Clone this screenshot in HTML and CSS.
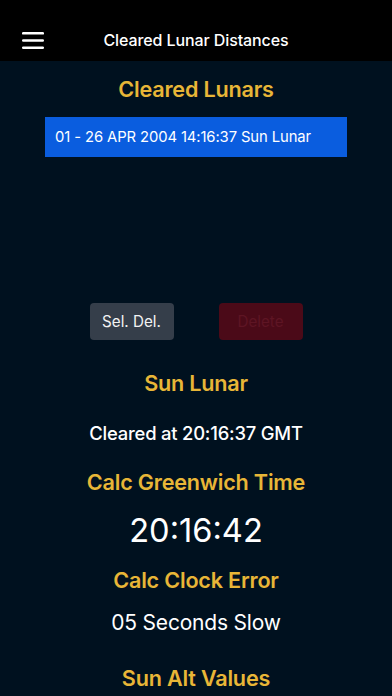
FILE: index.html
```html
<!DOCTYPE html>
<html>
<head>
<meta charset="utf-8">
<link rel="stylesheet" href="styles.css">
</head>
<body>
<header class="topbar">
  <button class="menu" aria-label="Menu">
    <svg width="22" height="18" viewBox="0 0 22 18"><rect x="0" y="1" width="22" height="2.6" rx="1.2" fill="#fff"/><rect x="0" y="8.2" width="22" height="2.6" rx="1.2" fill="#fff"/><rect x="0" y="15.4" width="22" height="2.6" rx="1.2" fill="#fff"/></svg>
  </button>
  <h1 class="title">Cleared Lunar Distances</h1>
</header>
<main class="content">
  <h2 class="heading first">Cleared Lunars</h2>
  <div class="list">
    <div class="list-item">01 - 26 APR 2004 14:16:37 Sun Lunar</div>
  </div>
  <div class="actions">
    <button class="btn btn-sel">Sel. Del.</button>
    <button class="btn btn-del">Delete</button>
  </div>
  <h2 class="heading sun">Sun Lunar</h2>
  <p class="cleared">Cleared at 20:16:37 GMT</p>
  <h2 class="heading gmt">Calc Greenwich Time</h2>
  <p class="time">20:16:42</p>
  <h2 class="heading err">Calc Clock Error</h2>
  <p class="slow">05 Seconds Slow</p>
  <h2 class="heading alt">Sun Alt Values</h2>
</main>
</body>
</html>
```
FILE: styles.css
```css
html, body {
  margin: 0;
  padding: 0;
  background: #00111f;
  height: 696px;
  overflow: hidden;
  font-family: Inter, "Noto Sans", sans-serif;
  color: #fff;
}
.topbar {
  height: 61px;
  background: #000;
  display: flex;
  align-items: center;
  position: relative;
  padding-top: 18px;
  box-sizing: border-box;
}
.menu {
  background: none;
  border: 0;
  padding: 0;
  margin-left: 22px;
  display: flex;
  width: 22px;
  height: 18px;
}
.title {
  margin: 0;
  position: absolute;
  left: 0;
  right: 0;
  top: 31px;
  text-align: center;
  font-size: 16px;
  font-weight: 500;
  line-height: 18px;
  letter-spacing: -0.1px;
  pointer-events: none;
}
.content {
  display: flex;
  flex-direction: column;
  align-items: center;
}
.heading {
  margin: 0;
  color: #e8b637;
  font-weight: 600;
  font-size: 21.6px;
  line-height: 26px;
  letter-spacing: -0.2px;
}
.first { margin-top: 15px; }
.list {
  width: 302px;
  height: 172px;
  margin-top: 15px;
  align-self: flex-start;
  margin-left: 45px;
}
.list-item {
  height: 40px;
  background: #0a5ddf;
  box-sizing: border-box;
  padding-left: 10px;
  display: flex;
  align-items: center;
  font-size: 14.8px;
  letter-spacing: -0.1px;
}
.actions {
  display: flex;
  gap: 45px;
  margin-top: 14px;
}
.btn {
  width: 84px;
  height: 37px;
  border: 0;
  border-radius: 4px;
  font-family: inherit;
  font-size: 15.2px;
}
.btn-sel {
  background: #353e4a;
  color: #f2f2f2;
}
.btn-del {
  background: #4b0a18;
  color: #5e1524;
}
.sun { margin-top: 30px; }
.cleared {
  margin: 26px 0 0;
  font-size: 18.4px;
  font-weight: 500;
  line-height: 22px;
  letter-spacing: -0.2px;
}
.gmt { margin-top: 25px; }
.time {
  margin: 15px 0 0;
  font-size: 32.6px;
  font-weight: 400;
  line-height: 40px;
}
.err { margin-top: 17px; }
.slow {
  margin: 17px 0 0;
  font-size: 21px;
  line-height: 26px;
  letter-spacing: -0.2px;
}
.alt { margin-top: 29px; }
```
